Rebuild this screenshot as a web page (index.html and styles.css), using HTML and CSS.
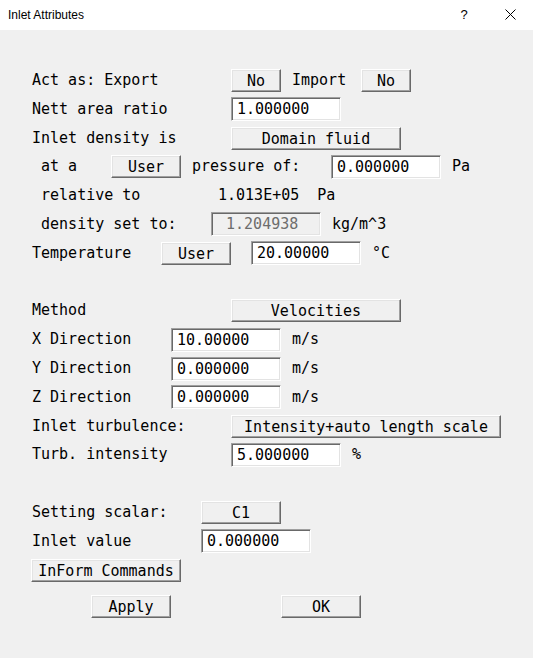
FILE: index.html
```html
<!DOCTYPE html>
<html>
<head>
<meta charset="utf-8">
<title>Inlet Attributes</title>
<link rel="stylesheet" href="styles.css">
</head>
<body>
<div class="window">
  <div class="titlebar">
    <span class="title">Inlet Attributes</span>
    <span class="tb-btn help">?</span>
    <span class="tb-btn close">
      <svg width="11" height="11" viewBox="0 0 11 11"><path d="M0.5 0.5 L10.5 10.5 M10.5 0.5 L0.5 10.5" stroke="#000" stroke-width="1" fill="none"/></svg>
    </span>
  </div>

  <div class="form">
    <div class="row">
      <span class="lbl c1">Act as: Export</span>
      <span class="btn c21 s5">No</span>
      <span class="lbl c27">Import</span>
      <span class="btn c34 s5">No</span>
    </div>
    <div class="row">
      <span class="lbl c1">Nett area ratio</span>
      <span class="edit c21 s11">1.000000</span>
    </div>
    <div class="row">
      <span class="lbl c1">Inlet density is</span>
      <span class="btn c21 s17">Domain fluid</span>
    </div>
    <div class="row">
      <span class="lbl c1"> at a</span>
      <span class="btn c9 s7">User</span>
      <span class="lbl c17">pressure of:</span>
      <span class="edit c31 s11">0.000000</span>
      <span class="lbl c43">Pa</span>
    </div>
    <div class="row">
      <span class="lbl c1"> relative to</span>
      <span class="lbl c19 shift">1.013E+05  Pa</span>
    </div>
    <div class="row">
      <span class="lbl c1"> density set to:</span>
      <span class="edit disabled c19 s11"> 1.204938</span>
      <span class="lbl c31">kg/m^3</span>
    </div>
    <div class="row">
      <span class="lbl c1">Temperature</span>
      <span class="btn c14 s7">User</span>
      <span class="edit c23 s11">20.00000</span>
      <span class="lbl c35">°C</span>
    </div>
    <div class="row"></div>
    <div class="row">
      <span class="lbl c1">Method</span>
      <span class="btn c21 s17">Velocities</span>
    </div>
    <div class="row">
      <span class="lbl c1">X Direction</span>
      <span class="edit c15 s11">10.00000</span>
      <span class="lbl c27">m/s</span>
    </div>
    <div class="row">
      <span class="lbl c1">Y Direction</span>
      <span class="edit c15 s11">0.000000</span>
      <span class="lbl c27">m/s</span>
    </div>
    <div class="row">
      <span class="lbl c1">Z Direction</span>
      <span class="edit c15 s11">0.000000</span>
      <span class="lbl c27">m/s</span>
    </div>
    <div class="row">
      <span class="lbl c1">Inlet turbulence:</span>
      <span class="btn c21 s27">Intensity+auto length scale</span>
    </div>
    <div class="row">
      <span class="lbl c1">Turb. intensity</span>
      <span class="edit c21 s11">5.000000</span>
      <span class="lbl c33">%</span>
    </div>
    <div class="row"></div>
    <div class="row">
      <span class="lbl c1">Setting scalar:</span>
      <span class="btn c18 s8">C1</span>
    </div>
    <div class="row">
      <span class="lbl c1">Inlet value</span>
      <span class="edit c18 s11">0.000000</span>
    </div>
    <div class="row">
      <span class="btn c1 s15">InForm Commands</span>
    </div>
    <div class="row actions">
      <span class="btn c7 s8">Apply</span>
      <span class="btn c26 s8">OK</span>
    </div>
  </div>
</div>
</body>
</html>
```

FILE: styles.css
```css
html, body {
  margin: 0;
  padding: 0;
  background: #f0f0f0;
}

.window {
  width: 533px;
  height: 658px;
  background: #f0f0f0;
  overflow: hidden;
}

.titlebar {
  height: 30px;
  background: #ffffff;
  display: flex;
  align-items: center;
  font-family: "Liberation Sans", Arial, sans-serif;
  font-size: 12px;
  color: #000;
}

.title {
  padding-left: 8px;
  flex: 1;
  padding-bottom: 1px;
}

.tb-btn {
  width: 46px;
  height: 30px;
  display: flex;
  align-items: center;
  justify-content: center;
}

.help {
  font-size: 13px;
  padding-bottom: 2px;
  box-sizing: border-box;
}

.close svg {
  display: block;
  margin-top: -1px;
}

.form {
  padding-top: 36px;
  padding-left: 31px;
  font-family: "DejaVu Sans Mono", "Liberation Mono", monospace;
  font-size: 15px;
  color: #000;
}

.row {
  display: grid;
  grid-template-columns: repeat(48, 10px);
  height: 28.82px;
  align-items: center;
}

.row > * {
  grid-row: 1;
}

.actions {
  margin-top: 7px;
}

.lbl {
  white-space: pre;
  line-height: 18px;
  padding-bottom: 1px;
  padding-left: 1px;
}

.shift {
  padding-left: 7px;
}

.btn {
  box-sizing: border-box;
  height: 23px;
  background: #f0f0f0;
  border-top: 1px solid #ffffff;
  border-left: 1px solid #ffffff;
  border-right: 1px solid #696969;
  border-bottom: 1px solid #696969;
  box-shadow: inset -1px -1px 0 #a0a0a0, inset 1px 1px 0 #e3e3e3;
  display: flex;
  align-items: center;
  justify-content: center;
  white-space: pre;
  line-height: 18px;
  padding-top: 1px;
}

.edit {
  box-sizing: border-box;
  height: 24px;
  background: #ffffff;
  border-top: 1px solid #a0a0a0;
  border-left: 1px solid #a0a0a0;
  border-right: 1px solid #ffffff;
  border-bottom: 1px solid #ffffff;
  box-shadow: inset 1px 1px 0 #696969, inset -1px -1px 0 #e3e3e3;
  display: flex;
  align-items: center;
  padding-left: 5px;
  white-space: pre;
  line-height: 18px;
}

.edit.disabled {
  background: #f0f0f0;
  color: #6d6d6d;
}

.c1 { grid-column-start: 1; }
.c7 { grid-column-start: 7; }
.c9 { grid-column-start: 9; }
.c14 { grid-column-start: 14; }
.c15 { grid-column-start: 15; }
.c17 { grid-column-start: 17; }
.c18 { grid-column-start: 18; }
.c19 { grid-column-start: 19; }
.c21 { grid-column-start: 21; }
.c23 { grid-column-start: 23; }
.c26 { grid-column-start: 26; }
.c27 { grid-column-start: 27; }
.c31 { grid-column-start: 31; }
.c33 { grid-column-start: 33; }
.c34 { grid-column-start: 34; }
.c35 { grid-column-start: 35; }
.c43 { grid-column-start: 43; }

.s5 { grid-column-end: span 5; }
.s7 { grid-column-end: span 7; }
.s8 { grid-column-end: span 8; }
.s11 { grid-column-end: span 11; }
.s15 { grid-column-end: span 15; }
.s17 { grid-column-end: span 17; }
.s27 { grid-column-end: span 27; }
```
